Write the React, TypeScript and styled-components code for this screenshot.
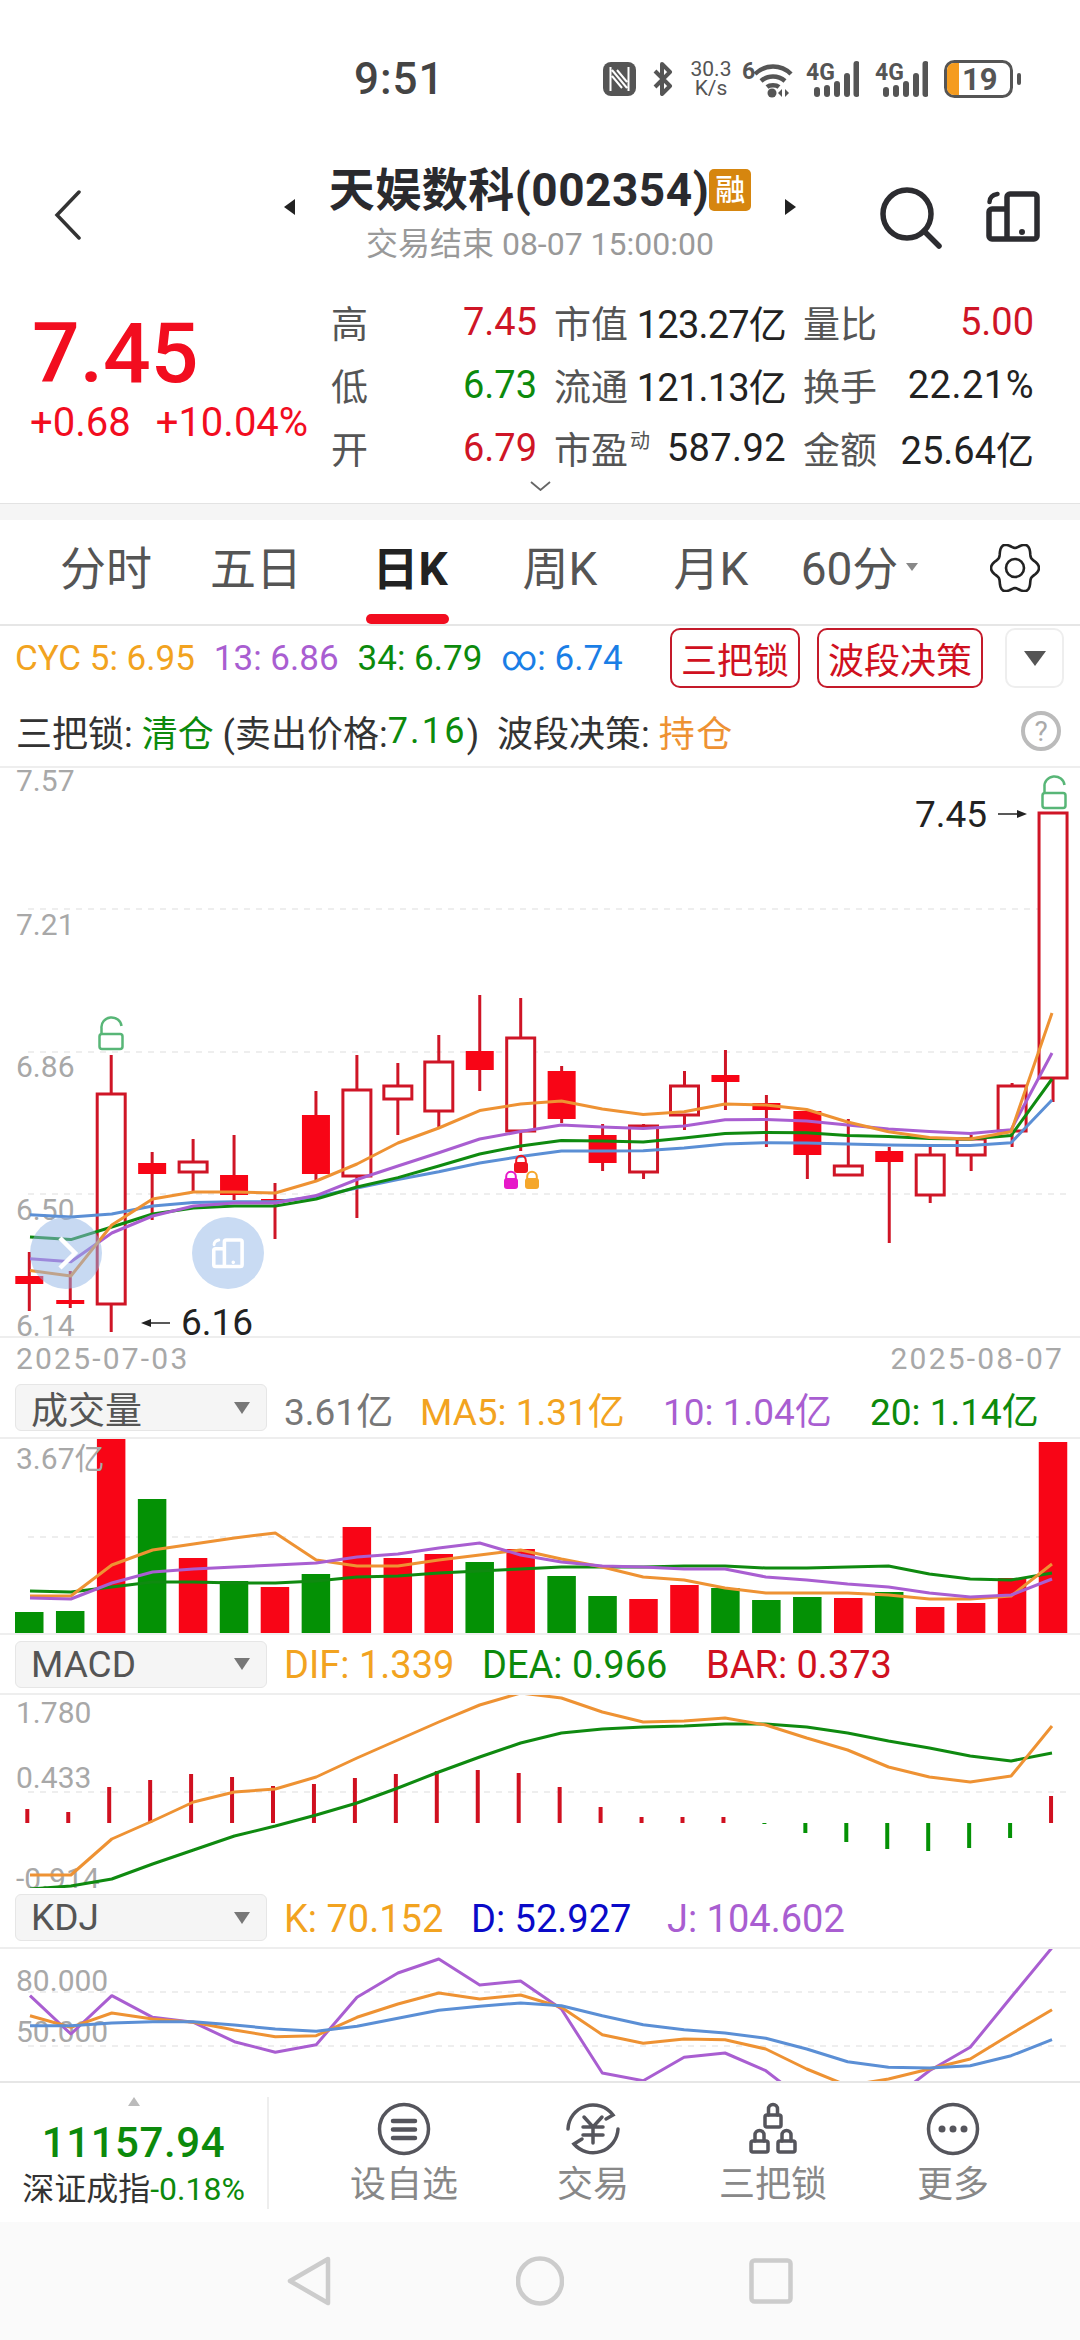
import React from "react";
import styled, { createGlobalStyle } from "styled-components";

const FONT = `Roboto, "Noto Sans CJK SC", sans-serif`;
const RED = "#f20d1f";
const DRED = "#cf1526";
const FILL = "#f80516";
const GREEN = "#0c8a0c";
const BAR_GREEN = "#049105";
const ORANGE = "#ee9233";
const GOLD = "#f2a320";
const PURPLE = "#a95ed1";
const BLUE = "#5b8fd5";

const Global = createGlobalStyle`
  html, body { margin: 0; padding: 0; background: #fff; }
  * { box-sizing: border-box; }
`;

const Page = styled.div`
  width: 1080px; height: 2340px; overflow: hidden; background: #fff;
  font-family: ${FONT}; display: flex; flex-direction: column; color: #222;
`;

/* Status bar */
const StatusBar = styled.div`
  height: 160px; padding: 60px 59px 62px 354px; display: flex; align-items: center;
  justify-content: space-between;
`;
const Time = styled.div`font-size: 44px; font-weight: 500; line-height: 38px; color: #444; letter-spacing: 1px;`;
const StatusIcons = styled.div`display: flex; align-items: center; height: 38px;`;
const Speed = styled.div`
  width: 46px; margin: 0 8px 0 15px; font-size: 21px; line-height: 19px; text-align: center; color: #555;
`;
const SigWrap = styled.svg<{ $ml: number }>`margin-left: ${(p) => p.$ml}px; display: block;`;
const StatusLabel = styled.text<{ $s: number }>`font-size: ${(p) => p.$s}px; font-weight: 700; fill: #555; font-family: ${FONT};`;

/* Header */
const Header = styled.div`height: 115px; display: grid; grid-template-columns: 1fr auto 1fr; align-items: center; padding: 0 54px;`;
const Back = styled.svg`display: block; margin-top: -6px;`;
const HeaderCenter = styled.div`display: flex; align-items: center; gap: 34px; margin-top: -7px;`;
const Arrow = styled.div<{ $dir: "l" | "r" }>`
  width: 0; height: 0; margin-top: -14px;
  border-top: 8px solid transparent; border-bottom: 8px solid transparent;
  ${(p) => (p.$dir === "l" ? "border-right: 11px solid #222;" : "border-left: 11px solid #222;")}
`;
const TitleCol = styled.div`display: flex; flex-direction: column; align-items: center;`;
const TitleRow = styled.div`display: flex; align-items: center; height: 46px;`;
const Title = styled.div`font-size: 46px; font-weight: 700; color: #2a2a2e; line-height: 46px; white-space: nowrap; letter-spacing: 0.5px;`;
const Badge = styled.div`
  width: 42px; height: 42px; margin-left: 0; border-radius: 5px; background: #d6860f; color: #fff;
  font-size: 30px; line-height: 42px; text-align: center; font-weight: 500;
`;
const Sub = styled.div`font-size: 32px; color: #999; margin-top: 14px; line-height: 34px; white-space: nowrap;`;
const HeaderRight = styled.div`display: flex; justify-content: flex-end; align-items: center; gap: 44px; margin-right: -15px;`;
const IconBlock = styled.svg`display: block;`;

/* Quote */
const Quote = styled.div`height: 228px; display: flex; padding-left: 30px; position: relative;`;
const PriceCol = styled.div`width: 301px; padding-top: 29px;`;
const BigPrice = styled.div`font-size: 84px; font-weight: 500; line-height: 100px; color: ${RED}; padding-left: 2px;`;
const Changes = styled.div`display: flex; gap: 25px; font-size: 40px; line-height: 44px; color: ${RED}; margin-top: -3px;`;
const QuoteGrid = styled.div`
  display: grid; grid-template-columns: 206px 232px 231px; column-gap: 17px; grid-auto-rows: 63px;
  padding-top: 15px;
`;
const Cell = styled.div`display: flex; justify-content: space-between; align-items: center; font-size: 38px; white-space: nowrap;`;
const Lab = styled.span`color: #555; font-size: 37px;`;
const Val = styled.span<{ $c?: string; $ls?: number }>`color: ${(p) => p.$c || "#222"}; letter-spacing: ${(p) => p.$ls || 0}px;`;
const Sup = styled.sup`font-size: 20px; line-height: 0; vertical-align: 16px; margin-left: 2px;`;
const Expand = styled.svg`position: absolute; left: 530px; bottom: 12px;`;
const Band = styled.div`height: 17px; background: #f5f5f5; border-top: 1px solid #e3e3e3;`;

/* Tabs */
const Tabs = styled.div`height: 106px; display: flex; padding-left: 30px; border-bottom: 2px solid #e6e6e6;`;
const Tab = styled.div<{ $w: number; $active?: boolean }>`
  width: ${(p) => p.$w}px; position: relative; padding-bottom: 14px; display: flex; align-items: center; justify-content: center;
  font-size: 46px; color: ${(p) => (p.$active ? "#222" : "#555")}; font-weight: ${(p) => (p.$active ? 700 : 400)};
  ${(p) => p.$active && `&::after { content: ""; position: absolute; left: 36px; bottom: 0; width: 83px; height: 10px; border-radius: 5px; background: ${RED}; }`}
`;
const Caret = styled.span`
  display: inline-block; width: 0; height: 0; margin-left: 8px; margin-top: 4px;
  border-left: 6px solid transparent; border-right: 6px solid transparent; border-top: 8px solid #888;
`;
const Gear = styled.svg`margin-left: 63px; margin-top: 24px;`;

/* Indicator rows */
const IndicatorRow = styled.div`height: 66px; display: flex; align-items: center; padding: 0 16px 2px 15px; font-size: 35px;`;
const Ind = styled.span<{ $c: string }>`color: ${(p) => p.$c}; margin-right: 19px; white-space: nowrap;`;
const Spacer = styled.div`flex: 1;`;
const OutlineBtn = styled.div<{ $w: number }>`
  width: ${(p) => p.$w}px; height: 60px; margin-left: 17px; border: 2.5px solid #c41a2a; border-radius: 10px; color: #d01020;
  font-size: 36px; display: flex; align-items: center; justify-content: center; flex: none;
`;
const DropBtn = styled.div`
  width: 59px; height: 60px; margin-left: 22px; border: 2px solid #eee; border-radius: 10px; display: flex; align-items: center; justify-content: center; flex: none;
  &::before { content: ""; border-left: 11px solid transparent; border-right: 11px solid transparent; border-top: 15px solid #555; }
`;
const StrategyRow = styled.div`height: 76px; display: flex; align-items: center; padding: 4px 19px 0 16px; font-size: 36px; color: #333; border-bottom: 2px solid #eee; white-space: pre;`;
const Colored = styled.span<{ $c: string; $ls?: number }>`color: ${(p) => p.$c}; letter-spacing: ${(p) => p.$ls || 0}px;`;
const Help = styled.div`
  margin-left: auto; width: 40px; height: 40px; border-radius: 50%; border: 4px solid #bbb; color: #aaa;
  font-size: 28px; display: flex; align-items: center; justify-content: center;
`;

/* Charts */
const ChartSvg = styled.svg<{ $h: number }>`display: block; width: 1080px; height: ${(p) => p.$h}px; flex: none;`;
const AxisText = styled.text`font-size: 30px; fill: #a8a8a8; font-family: ${FONT};`;
const Note = styled.text`font-size: 37px; fill: #222; font-family: ${FONT};`;
const DateRow = styled.div`height: 42px; display: flex; justify-content: space-between; align-items: center; padding: 0 16px; font-size: 30px; letter-spacing: 2.2px; color: #a8a8a8; border-top: 2px solid #eee;`;
const PaneHeader = styled.div<{ $h: number }>`
  height: ${(p) => p.$h}px; flex: none; display: flex; align-items: center; padding: 0 0 0 15px; border-bottom: 2px solid #eee; white-space: nowrap;
`;
const Selector = styled.div`
  width: 252px; height: 47px; margin-right: 17px; background: #f5f5f5; border: 1px solid #e6e6e6; border-radius: 6px; padding: 0 16px 0 15px;
  display: flex; justify-content: space-between; align-items: center; font-size: 37px; color: #555;
  &::after { content: ""; border-left: 8px solid transparent; border-right: 8px solid transparent; border-top: 12px solid #777; }
`;
const PaneVal = styled.span<{ $w: number; $c: string; $s: number }>`
  width: ${(p) => p.$w}px; color: ${(p) => p.$c}; font-size: ${(p) => p.$s}px; padding-top: 2px;
`;

/* Footer */
const Footer = styled.div`height: 141px; flex: none; display: flex; border-top: 2px solid #e6e6e6; background: #fff;`;
const IndexBlock = styled.div`width: 269px; margin-top: 14px; height: 112px; border-right: 2px solid #eee; display: flex; flex-direction: column; align-items: center; position: relative;`;
const UpMark = styled.div`border-left: 6px solid transparent; border-right: 6px solid transparent; border-bottom: 9px solid #bbb; margin-bottom: 12px;`;
const IndexVal = styled.div`font-size: 42px; font-weight: 500; color: ${GREEN}; line-height: 50px; letter-spacing: 0.6px;`;
const IndexSub = styled.div`font-size: 32px; color: #333; line-height: 40px; margin-top: 1px; white-space: nowrap;`;
const Actions = styled.div`display: flex; padding-left: 45px;`;
const Action = styled.div<{ $ml?: number }>`
  width: 180px; margin-left: ${(p) => p.$ml || 0}px; display: flex; flex-direction: column; align-items: center; padding-top: 18px;
  color: #888; font-size: 36px; line-height: 44px;
`;
const ActionLabel = styled.div`margin-top: 6px;`;
const NavBar = styled.div`flex: 1; background: #fafafa; display: flex; align-items: center; justify-content: center; gap: 185px;`;

const line = (ys: number[], x0 = 30, dx = 40.88) => ys.map((y, i) => `${(x0 + dx * i).toFixed(1)},${y.toFixed(1)}`).join(" ");

const gearPath = (() => {
  const pts: string[] = [];
  for (let d = 0; d < 360; d += 5) {
    const a = (d * Math.PI) / 180;
    const r = 21.3 + 2.7 * Math.cos(6 * a);
    pts.push(`${(25 + r * Math.cos(a)).toFixed(2)} ${(24 + 1.08 * r * Math.sin(a)).toFixed(2)}`);
  }
  return `M${pts.join("L")}Z`;
})();

type C = [number, number, number, number, boolean];
const candles: C[] = [
  [1252, 1276, 1284, 1311, true], [1271, 1300, 1304, 1308, true], [1055, 1094, 1304, 1332, false], [1152, 1163, 1174, 1220, true],
  [1139, 1162, 1172, 1191, false], [1135, 1175, 1195, 1200, true], [1183, 1199, 1201, 1239, true], [1091, 1115, 1174, 1181, true],
  [1055, 1090, 1176, 1218, false], [1063, 1086, 1099, 1135, false], [1035, 1062, 1111, 1128, false], [995, 1051, 1070, 1091, true],
  [998, 1038, 1131, 1151, false], [1066, 1071, 1119, 1123, true], [1124, 1135, 1163, 1171, true], [1124, 1126, 1172, 1179, false],
  [1071, 1086, 1115, 1130, false], [1050, 1075, 1082, 1110, true], [1095, 1103, 1110, 1147, true], [1110, 1111, 1155, 1179, true],
  [1119, 1166, 1175, 1175, false], [1147, 1151, 1162, 1243, true], [1144, 1155, 1195, 1203, false], [1135, 1139, 1155, 1171, false],
  [1083, 1086, 1131, 1147, false], [813, 813, 1078, 1102, false],
];
const maO = [1270.6, 1276, 1225, 1199, 1192, 1192, 1193, 1181, 1164, 1143, 1128, 1110.6, 1104, 1101, 1109, 1114.4, 1111.7, 1104, 1105, 1109.5, 1122, 1131.7, 1137.4, 1139, 1131.7, 1013];
const maP = [1258.7, 1261.8, 1233, 1216, 1206, 1203, 1203, 1195.6, 1179.5, 1166, 1152.7, 1139, 1131.6, 1125, 1127, 1128.6, 1126, 1119.8, 1119.4, 1121, 1125, 1129, 1131.6, 1133.6, 1129.7, 1053];
const maG = [1237, 1239.6, 1227, 1214, 1208, 1206, 1206, 1199, 1187, 1177.6, 1166, 1154, 1146, 1140.5, 1141, 1142, 1138, 1133.6, 1132.4, 1132.8, 1135.5, 1136.6, 1138.5, 1139, 1135.5, 1079];
const maB = [1214.7, 1217, 1214, 1206, 1202.5, 1201.7, 1201.7, 1196.7, 1188, 1179.5, 1171.8, 1163, 1156.5, 1151, 1151, 1150.8, 1148, 1144, 1142.7, 1143, 1144, 1145, 1145.4, 1145.4, 1142.7, 1100];

const vols: [number, boolean][] = [
  [1612, false], [1611, false], [1439, true], [1499, false], [1558, true], [1581, false], [1587, true], [1574, false], [1527, true], [1558, true], [1554, true], [1562, false], [1549, true],
  [1576, false], [1596, false], [1599, true], [1585, true], [1588, false], [1600, false], [1597, false], [1598, true], [1592, false], [1607, true], [1603, true], [1578, true], [1442, true],
];
const vO = [1596, 1596, 1565, 1550, 1544, 1538, 1533, 1560, 1566, 1566, 1560, 1555, 1550, 1559, 1567, 1577, 1580, 1588, 1593, 1593, 1593, 1595, 1599, 1599, 1596, 1564];
const vP = [1598, 1599, 1583, 1572, 1569, 1567, 1565, 1563, 1557, 1554, 1548, 1543, 1555, 1562, 1566, 1567, 1569, 1569, 1577, 1580, 1584, 1587, 1593, 1597, 1595, 1579];
const vG = [1591, 1592, 1587, 1582, 1582, 1583, 1583, 1581, 1577, 1576, 1573, 1571, 1569, 1567, 1567, 1567, 1566, 1566, 1568, 1568, 1567, 1566, 1574, 1579, 1580, 1573];

const macd = [1809, 1812, 1787, 1780, 1774, 1777, 1786, 1784, 1778, 1774, 1771, 1770, 1773, 1787, 1807, 1817, 1817, 1817, 1824, 1833, 1842, 1849, 1851, 1848, 1838, 1796];
const dif = [1875, 1875, 1839, 1821, 1802, 1792, 1789, 1777, 1758, 1740, 1722, 1705, 1693, 1698, 1712, 1722, 1721, 1718, 1725, 1738, 1750, 1767, 1777, 1782, 1776, 1726];
const dea = [1889, 1886, 1879, 1864, 1850, 1836, 1826, 1815, 1803, 1788, 1772, 1757, 1743, 1733, 1729, 1727, 1726, 1724, 1724, 1727, 1733, 1741, 1748, 1756, 1761, 1753];

const py = (a: number[]) => a.map((v) => 1870 + v / 3);
const kK = py([440, 475, 432, 450, 460, 483, 503, 500, 445, 405, 372, 390, 378, 415, 497, 523, 510, 512, 540, 600, 650, 630, 600, 570, 495, 422]);
const kD = py([470, 470, 462, 458, 458, 468, 480, 487, 472, 448, 424, 412, 402, 410, 440, 467, 482, 492, 508, 540, 578, 595, 597, 590, 560, 512]);
const kJ = py([380, 495, 380, 445, 460, 518, 550, 527, 385, 312, 270, 348, 336, 420, 612, 635, 565, 552, 605, 700, 740, 700, 605, 535, 385, 236]);

const Lines = ({ sets, w = 3 }: { sets: [number[], string][]; w?: number }) => (
  <>
    {sets.map(([ys, c], i) => (
      <polyline key={i} points={line(ys)} fill="none" stroke={c} strokeWidth={w} strokeLinejoin="round" />
    ))}
  </>
);

const Grid = ({ ys }: { ys: number[] }) => (
  <>
    {ys.map((y) => (
      <line key={y} x1="28" x2="1070" y1={y} y2={y} stroke="#eee" strokeWidth="2" strokeDasharray="6 6" />
    ))}
  </>
);

const OpenLock = ({ x, y }: { x: number; y: number }) => (
  <g fill="none" stroke="#58b677" strokeWidth="2.5">
    <rect x={x} y={y + 17} width="23" height="15" rx="2.5" />
    <path d={`M${x + 2} ${y + 16}v-5a10 9.500 0 0 1 20-2`} />
  </g>
);
const SolidLock = ({ x, y, c }: { x: number; y: number; c: string }) => (
  <g>
    <rect x={x} y={y + 7} width="14" height="11" rx="3" fill={c} />
    <path d={`M${x + 2.2} ${y + 8}v-2.500a4.800 4.800 0 0 1 9.600 0v2.500`} fill="none" stroke={c} strokeWidth="2" />
  </g>
);
const TabletGlyph = ({ c, s = 1 }: { c: string; s?: number }) => (
  <g stroke={c} fill="none" strokeWidth={5.5 * s} strokeLinejoin="round" strokeLinecap="round">
    <path d="M21 50V8a3 3 0 0 1 3-3h24a3 3 0 0 1 3 3v39a3 3 0 0 1-3 3H6a3 3 0 0 1-3-3V23a3 3 0 0 1 3-3h15" />
    <path d="M3.500 13c0-4 3-7 8-8" strokeWidth={4.5 * s} />
    <circle cx="36" cy="43" r="2" fill={c} strokeWidth={2} />
  </g>
);

const PriceChart = () => (
  <ChartSvg $h={568} viewBox="0 768 1080 568">
    <Grid ys={[909, 1052, 1194]} />
    <AxisText x="16" y="791">7.57</AxisText>
    <AxisText x="16" y="935">7.21</AxisText>
    <AxisText x="16" y="1077">6.86</AxisText>
    <AxisText x="16" y="1220">6.50</AxisText>
    <AxisText x="16" y="1336">6.14</AxisText>
    {candles.map(([hi, top, bot, lo, filled], i) => {
      const x = 29.3 + 40.95 * i;
      return (
        <g key={i}>
          <line x1={x} x2={x} y1={hi} y2={lo} stroke={DRED} strokeWidth="3" />
          {filled ? (
            <rect x={x - 14} y={top} width="28" height={bot - top} fill={FILL} />
          ) : (
            <rect x={x - 14} y={top} width="28" height={bot - top} fill="#fff" stroke={DRED} strokeWidth="3" />
          )}
        </g>
      );
    })}
    <Lines sets={[[maB, BLUE], [maG, "#0f8a10"], [maP, PURPLE], [maO, ORANGE]]} />
    <OpenLock x={99.5} y={1017} />
    <OpenLock x={1042.5} y={776} />
    <SolidLock x={514} y={1155} c="#f0141f" />
    <SolidLock x={504} y={1171} c="#e619c8" />
    <SolidLock x={525} y={1171} c="#f5a72b" />
    <Note x="181" y="1335">6.16</Note>
    <line x1="146" x2="170" y1="1323" y2="1323" stroke="#222" strokeWidth="1.5" />
    <polygon points="141,1323 151,1319 151,1327" fill="#222" />
    <Note x="915" y="827">7.45</Note>
    <line x1="998" x2="1022" y1="814" y2="814" stroke="#222" strokeWidth="1.5" />
    <polygon points="1027,814 1017,810 1017,818" fill="#222" />
    <circle cx="66" cy="1253" r="36" fill="#8fb4e6" fillOpacity="0.5" />
    <path d="M60 1238l15 15-15 15" fill="none" stroke="#fff" strokeWidth="4.5" />
    <circle cx="228" cy="1253" r="36" fill="#c9dbf3" />
    <g transform="translate(212 1237) scale(0.59)"><TabletGlyph c="#fff" s={1.1} /></g>
  </ChartSvg>
);

const VolumeChart = () => (
  <ChartSvg $h={196} viewBox="0 1439 1080 196">
    <Grid ys={[1537]} />
    {vols.map(([top, up], i) => (
      <rect key={i} x={15 + 40.95 * i} y={top} width="28.5" height={1634 - top} fill={up ? FILL : BAR_GREEN} />
    ))}
    <AxisText x="16" y="1469">3.67亿</AxisText>
    <Lines sets={[[vG, "#0f8a10"], [vO, ORANGE], [vP, PURPLE]]} />
    <line x1="0" x2="1080" y1="1634" y2="1634" stroke="#eee" strokeWidth="2" />
  </ChartSvg>
);

const MacdChart = () => (
  <ChartSvg $h={193} viewBox="0 1695 1080 193">
    <Grid ys={[1792]} />
    <AxisText x="16" y="1723">1.780</AxisText>
    <AxisText x="16" y="1788">0.433</AxisText>
    <AxisText x="16" y="1889">-0.914</AxisText>
    {macd.map((t, i) => {
      const x = 27.3 + 40.95 * i;
      const up = t < 1823;
      return <line key={i} x1={x} x2={x} y1={t} y2={1823} stroke={up ? "#d01020" : BAR_GREEN} strokeWidth="4" />;
    })}
    <Lines sets={[[dea, "#0f8a10"], [dif, ORANGE]]} />
  </ChartSvg>
);

const KdjChart = () => (
  <ChartSvg $h={132} viewBox="0 1950 1080 132">
    <Grid ys={[1993, 2047]} />
    <AxisText x="16" y="1992">80.000</AxisText>
    <AxisText x="16" y="2043">50.000</AxisText>
    <Lines sets={[[kJ, PURPLE]]} />
    <Lines sets={[[kK, ORANGE], [kD, BLUE]]} />
  </ChartSvg>
);

const D = "#55555c";
const Ic = ({ children }: { children: React.ReactNode }) => (
  <IconBlock width="60" height="56" viewBox="0 0 60 56" fill="none" stroke={D} strokeWidth="3.5" strokeLinecap="round">
    {children}
  </IconBlock>
);

export default function App() {
  return (
    <Page>
      <Global />
      <StatusBar>
        <Time>9:51</Time>
        <StatusIcons>
          <IconBlock width="33" height="34" viewBox="0 0 33 34">
            <rect width="33" height="34" rx="8" fill="#555" />
            <path d="M7.500 5v24M25.500 5v24M9 8l15 18M14 8l10 12M9 14l10 12" stroke="#fff" strokeWidth="2" fill="none" />
          </IconBlock>
          <SigWrap $ml={16} width="21" height="34" viewBox="0 0 21 34">
            <path d="M3 9l15 15-8 8V2l8 8L3 25" fill="none" stroke="#555" strokeWidth="4" strokeLinejoin="round" />
          </SigWrap>
          <Speed>30.3<br />K/s</Speed>
          <SigWrap $ml={0} width="52" height="38" viewBox="0 0 52 38">
            <StatusLabel $s={23} x="0" y="19">6</StatusLabel>
            <g fill="none" stroke="#555" strokeWidth="4.5">
              <path d="M13 14c10-10 26-10 36 0" />
              <path d="M19 21c7-6 17-6 24 0" />
              <path d="M25 27c3-2.500 9-2.500 12 0" />
            </g>
            <circle cx="30" cy="33" r="4.500" fill="#555" />
            <path d="M40 29v8l-4-4zM43 29v8l4-4z" fill="#555" />
          </SigWrap>
          {[12, 16].map((ml) => (
            <SigWrap key={ml} $ml={ml} width="53" height="38" viewBox="0 0 53 38">
              <StatusLabel $s={23} x="0" y="20">4G</StatusLabel>
              {[[8, 10], [18, 12], [28, 16], [38, 24], [47.500, 36]].map(([x, h]) => (
                <rect key={x} x={x} y={37 - h} width="6" height={h} rx="3" fill="#555" />
              ))}
            </SigWrap>
          ))}
          <SigWrap $ml={16} width="77" height="38" viewBox="0 0 77 38">
            <rect x="1.500" y="1.500" width="66" height="35" rx="9" fill="#fff" stroke="#555" strokeWidth="3" />
            <path d="M3 10a7 7 0 0 1 7-7h5v32h-5a7 7 0 0 1-7-7z" fill="#f59c1f" />
            <StatusLabel $s={31} x="18" y="30">19</StatusLabel>
            <rect x="73" y="13" width="4" height="12" rx="2" fill="#555" />
          </SigWrap>
        </StatusIcons>
      </StatusBar>

      <Header>
        <Back width="27" height="50" viewBox="0 0 27 50">
          <path d="M25 2L3 25l22 23" fill="none" stroke="#333" strokeWidth="3.500" strokeLinecap="round" />
        </Back>
        <HeaderCenter>
          <Arrow $dir="l" />
          <TitleCol>
            <TitleRow><Title>天娱数科(002354)</Title><Badge>融</Badge></TitleRow>
            <Sub>交易结束 08-07 15:00:00</Sub>
          </TitleCol>
          <Arrow $dir="r" />
        </HeaderCenter>
        <HeaderRight>
          <IconBlock width="62" height="62" viewBox="0 0 62 62">
            <circle cx="27" cy="27" r="24" fill="none" stroke="#2c2c30" strokeWidth="5.500" />
            <path d="M44 44l15 15" stroke="#2c2c30" strokeWidth="5.500" strokeLinecap="round" />
          </IconBlock>
          <IconBlock width="55" height="57" viewBox="0 0 55 57"><TabletGlyph c="#2c2c30" /></IconBlock>
        </HeaderRight>
      </Header>

      <Quote>
        <PriceCol>
          <BigPrice>7.45</BigPrice>
          <Changes><span>+0.68</span><span>+10.04%</span></Changes>
        </PriceCol>
        <QuoteGrid>
          <Cell><Lab>高</Lab><Val $c={DRED}>7.45</Val></Cell>
          <Cell><Lab>市值</Lab><Val $ls={-0.8}>123.27亿</Val></Cell>
          <Cell><Lab>量比</Lab><Val $c={DRED}>5.00</Val></Cell>
          <Cell><Lab>低</Lab><Val $c={GREEN}>6.73</Val></Cell>
          <Cell><Lab>流通</Lab><Val $ls={-0.8}>121.13亿</Val></Cell>
          <Cell><Lab>换手</Lab><Val $ls={0.5}>22.21%</Val></Cell>
          <Cell><Lab>开</Lab><Val $c={DRED}>6.79</Val></Cell>
          <Cell><Lab>市盈<Sup>动</Sup></Lab><Val $ls={0.4}>587.92</Val></Cell>
          <Cell><Lab>金额</Lab><Val>25.64亿</Val></Cell>
        </QuoteGrid>
        <Expand width="21" height="10" viewBox="0 0 21 10"><path d="M1 1l9.500 8L20 1" fill="none" stroke="#666" strokeWidth="1.800" /></Expand>
      </Quote>
      <Band />

      <Tabs>
        <Tab $w={152}>分时</Tab>
        <Tab $w={148}>五日</Tab>
        <Tab $w={160} $active>日K</Tab>
        <Tab $w={140}>周K</Tab>
        <Tab $w={162}>月K</Tab>
        <Tab $w={135}>60分<Caret /></Tab>
        <Gear width="50" height="48" viewBox="0 0 50 48" fill="none" stroke="#222" strokeWidth="2.600">
          <path d={gearPath} strokeLinejoin="round" />
          <circle cx="25" cy="24" r="9" />
        </Gear>
      </Tabs>

      <IndicatorRow>
        <Ind $c={GOLD}>CYC 5: 6.95</Ind>
        <Ind $c={PURPLE}>13: 6.86</Ind>
        <Ind $c={GREEN}>34: 6.79</Ind>
        <Ind $c="#1a7ee6">∞: 6.74</Ind>
        <Spacer />
        <OutlineBtn $w={130}>三把锁</OutlineBtn>
        <OutlineBtn $w={166}>波段决策</OutlineBtn>
        <DropBtn />
      </IndicatorRow>
      <StrategyRow>
        三把锁: <Colored $c={GREEN}>清仓</Colored> (卖出价格:<Colored $c={GREEN} $ls={2.2}>7.16</Colored>)  波段决策: <Colored $c={ORANGE} $ls={1.5}>持仓</Colored>
        <Help>?</Help>
      </StrategyRow>

      <PriceChart />
      <DateRow><span>2025-07-03</span><span>2025-08-07</span></DateRow>

      <PaneHeader $h={61}>
        <Selector>成交量</Selector>
        <PaneVal $s={37} $w={136} $c="#777">3.61亿</PaneVal>
        <PaneVal $s={37} $w={243} $c={GOLD}>MA5: 1.31亿</PaneVal>
        <PaneVal $s={37} $w={207} $c={PURPLE}>10: 1.04亿</PaneVal>
        <PaneVal $s={37} $w={200} $c={GREEN}>20: 1.14亿</PaneVal>
      </PaneHeader>
      <VolumeChart />
      <PaneHeader $h={60}>
        <Selector>MACD</Selector>
        <PaneVal $s={38} $w={198} $c={GOLD}>DIF: 1.339</PaneVal>
        <PaneVal $s={38} $w={224} $c={GREEN}>DEA: 0.966</PaneVal>
        <PaneVal $s={38} $w={200} $c="#d01020">BAR: 0.373</PaneVal>
      </PaneHeader>
      <MacdChart />
      <PaneHeader $h={61}>
        <Selector>KDJ</Selector>
        <PaneVal $s={38} $w={187} $c={GOLD}>K: 70.152</PaneVal>
        <PaneVal $s={38} $w={196} $c="#0a0ac8">D: 52.927</PaneVal>
        <PaneVal $s={38} $w={200} $c={PURPLE}>J: 104.602</PaneVal>
      </PaneHeader>
      <KdjChart />

      <Footer>
        <IndexBlock>
          <UpMark />
          <IndexVal>11157.94</IndexVal>
          <IndexSub>深证成指<Colored $c={GREEN}>-0.18%</Colored></IndexSub>
        </IndexBlock>
        <Actions>
          <Action>
            <Ic>
              <circle cx="30" cy="28" r="24.500" />
              <path d="M19 20h22M19 28.500h22M19 37h22" strokeWidth="4.500" />
            </Ic>
            <ActionLabel>设自选</ActionLabel>
          </Action>
          <Action $ml={9}>
            <Ic>
              <path d="M5 28A25 25 0 0 1 50 14L43 18M55 28A25 25 0 0 1 11 43L19 38" />
              <path d="M21 16l9 10 9-10M20 26h20M20 34h20M30 26v16" />
            </Ic>
            <ActionLabel>交易</ActionLabel>
          </Action>
          <Action>
            <Ic>
              <rect x="22" y="14" width="16" height="12" rx="2" />
              <path d="M25.500 14V8a4.500 4.500 0 0 1 9 0v6" />
              <rect x="8" y="40" width="17" height="11" rx="2" />
              <path d="M12 40v-6a4.500 4.500 0 0 1 9 0v6" />
              <rect x="35" y="40" width="17" height="11" rx="2" />
              <path d="M39 40v-6a4.500 4.500 0 0 1 9 0v6" />
            </Ic>
            <ActionLabel>三把锁</ActionLabel>
          </Action>
          <Action>
            <Ic>
              <circle cx="30" cy="28" r="24.500" />
              <circle cx="19" cy="28" r="3.500" fill={D} stroke="none" />
              <circle cx="30" cy="28" r="3.500" fill={D} stroke="none" />
              <circle cx="41" cy="28" r="3.500" fill={D} stroke="none" />
            </Ic>
            <ActionLabel>更多</ActionLabel>
          </Action>
        </Actions>
      </Footer>
      <NavBar>
        <IconBlock width="44" height="50" viewBox="0 0 44 50">
          <path d="M41 3L3 25l38 22z" fill="none" stroke="#ccc" strokeWidth="4.500" strokeLinejoin="round" />
        </IconBlock>
        <IconBlock width="48" height="50" viewBox="0 0 48 50">
          <ellipse cx="24" cy="25" rx="22" ry="22.500" fill="none" stroke="#ccc" strokeWidth="4.500" />
        </IconBlock>
        <IconBlock width="44" height="46" viewBox="0 0 44 46">
          <rect x="2.500" y="2.500" width="39" height="41" rx="3" fill="none" stroke="#ccc" strokeWidth="4.500" />
        </IconBlock>
      </NavBar>
    </Page>
  );
}
